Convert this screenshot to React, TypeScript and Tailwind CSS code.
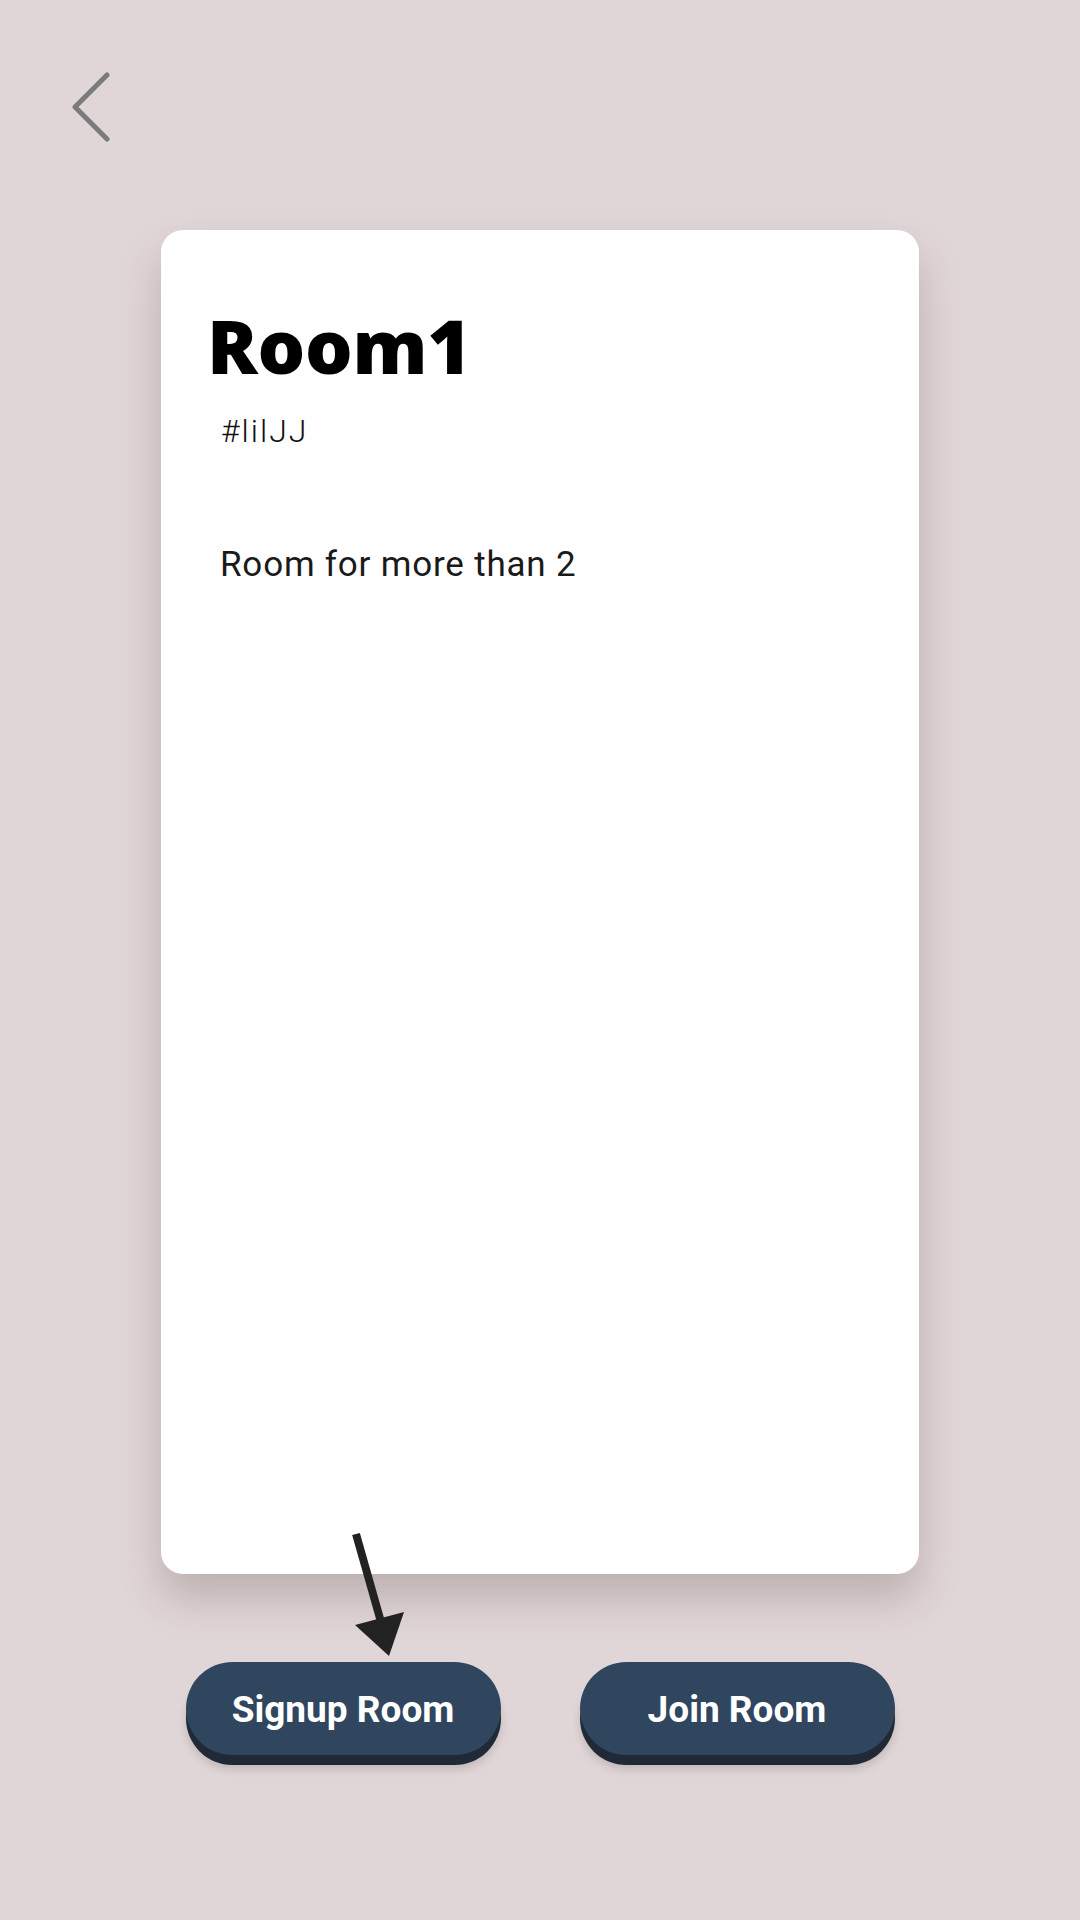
import React from "react";

export default function App() {
  return (
    <div className="w-[1080px] h-[1920px] bg-[#e1d6d7] flex flex-col items-center overflow-hidden" style={{ fontFamily: "Roboto, sans-serif" }}>
      <div className="w-full pl-[72px] pt-[70px] h-[230px]">
        <svg width="40" height="72" viewBox="0 0 40 72" fill="none">
          <polyline points="35,5 3,37 35,69" stroke="#7b7b7b" strokeWidth="5" strokeLinecap="round" strokeLinejoin="round" />
        </svg>
      </div>
      <div className="relative w-[758px] h-[1344px] bg-white rounded-[22px] shadow-[0_24px_40px_rgba(60,40,40,0.22)] flex flex-col pl-[46px] pt-[78px]">
        <div className="text-[75px] leading-none font-extrabold text-black tracking-[-0.3px]" style={{ fontFamily: '"Open Sans", sans-serif' }}>Room1</div>
        <div className="mt-[32px] ml-[14px] text-[32px] leading-none font-light tracking-[2px] text-[#111]">#lilJJ</div>
        <div className="mt-[100px] ml-[13px] text-[35px] leading-none tracking-[0.8px] text-[#1a1a1a]">Room for more than 2</div>
        <svg className="absolute left-[190px] top-[1299px]" width="60" height="135" viewBox="0 0 60 135" fill="none">
          <line x1="5" y1="5" x2="32" y2="100" stroke="#222" strokeWidth="8" />
          <polygon points="4,96 53,83 38,127" fill="#222" />
        </svg>
      </div>
      <div className="mt-[88px] flex gap-[79px]">
        <button className="w-[315px] h-[93px] pt-[3px] rounded-full bg-[#30465e] text-white text-[37px] font-bold shadow-[0_10px_0_#1f2a36,0_14px_10px_rgba(0,0,0,0.15)]">Signup Room</button>
        <button className="w-[315px] h-[93px] pt-[3px] rounded-full bg-[#30465e] text-white text-[37px] font-bold shadow-[0_10px_0_#1f2a36,0_14px_10px_rgba(0,0,0,0.15)]">Join Room</button>
      </div>
    </div>
  );
}
